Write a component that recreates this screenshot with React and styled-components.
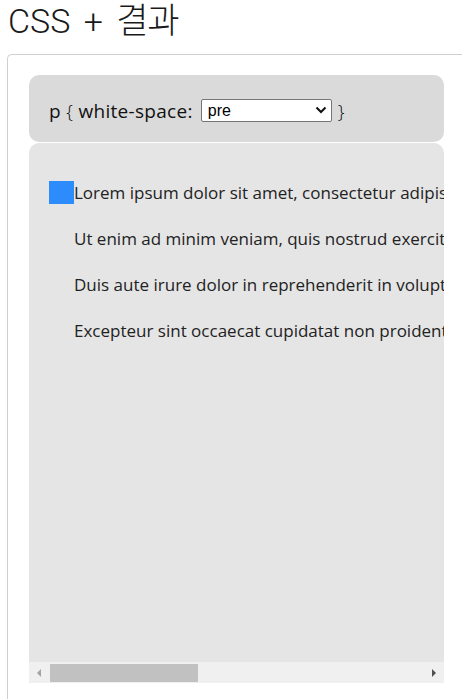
import React from 'react';
import styled, { createGlobalStyle } from 'styled-components';

const GlobalStyle = createGlobalStyle`
  html, body {
    margin: 0;
    padding: 0;
    background: #fff;
    overflow: hidden;
  }
  body {
    font-family: 'Open Sans', 'Noto Sans CJK KR', sans-serif;
    color: #222;
  }
`;

// Page shell
const Page = styled.div`
  padding-left: 7px;
  width: 520px;
`;

const Title = styled.h1`
  margin: 0;
  padding-left: 1px;
  height: 54px;
  line-height: 42px;
  font-family: Roboto, 'Noto Sans CJK KR', sans-serif;
  font-weight: 300;
  font-size: 34px;
  word-spacing: 5px;
  color: #1a1a1a;
`;

const Hangul = styled.span`
  font-family: 'Noto Sans CJK KR', sans-serif;
  font-weight: 300;
  font-size: 35px;
  line-height: 1;
  letter-spacing: -1px;
`;

const Frame = styled.div`
  border: 1px solid #cfcfcf;
  border-right: none;
  border-radius: 5px 0 0 0;
  padding: 20px 0 30px 21px;
`;

// CSS control bar
const ControlBar = styled.div`
  width: 415px;
  height: 67px;
  box-sizing: border-box;
  background: #dadada;
  border-radius: 10px;
  display: flex;
  align-items: center;
  padding: 4px 0 0 20px;
  font-size: 19px;
  letter-spacing: 0.3px;
  color: #111;
  white-space: pre;
`;

const Brace = styled.span`
  font-weight: 300;
`;

const SelectWrap = styled.span`
  position: relative;
  display: inline-flex;
  margin: 0 6px 0 8px;
`;

const Select = styled.select`
  appearance: none;
  width: 131px;
  height: 23px;
  box-sizing: border-box;
  border: 1px solid #767676;
  border-radius: 2px;
  background: #fff;
  padding: 0 0 0 6px;
  font-family: 'Liberation Sans', Arial, sans-serif;
  font-size: 16px;
  letter-spacing: 0;
  color: #000;
  outline: none;
`;

const Chevron = styled.svg`
  position: absolute;
  right: 5px;
  top: 7px;
  pointer-events: none;
`;

// Result panel
const Result = styled.div`
  margin-top: 1px;
  width: 415px;
  height: 540px;
  background: #e5e5e5;
  border-radius: 10px 10px 0 0;
  display: flex;
  flex-direction: column;
  overflow: hidden;
`;

const Viewport = styled.div`
  flex: 1;
  overflow: hidden;
  padding: 38px 0 0 20px;
`;

const Line = styled.p`
  margin: 0 0 23px;
  height: 23px;
  display: flex;
  align-items: center;
  padding-left: ${({ $marker }) => ($marker ? 0 : 25)}px;
  white-space: pre;
  font-size: 17px;
  color: #222;
`;

const Marker = styled.span`
  flex: none;
  width: 25px;
  height: 23px;
  background: #2d8cfc;
`;

const Scrollbar = styled.div`
  flex: none;
  height: 21px;
  background: #f0f0f0;
  display: flex;
  align-items: stretch;
`;

const ArrowButton = styled.div`
  width: 21px;
  display: flex;
  align-items: center;
  justify-content: center;
`;

const Track = styled.div`
  flex: 1;
  display: flex;
  padding: 2px 0 1px;
`;

const Thumb = styled.div`
  width: 148px;
  background: #c1c1c1;
`;

const lines = [
  'Lorem ipsum dolor sit amet, consectetur adipiscing elit, sed do eiusmod tempor incididunt ut labore et dolore magna aliqua.',
  'Ut enim ad minim veniam, quis nostrud exercitation ullamco laboris nisi ut aliquip ex ea commodo consequat.',
  'Duis aute irure dolor in reprehenderit in voluptate velit esse cillum dolore eu fugiat nulla pariatur.',
  'Excepteur sint occaecat cupidatat non proident, sunt in culpa qui officia deserunt mollit anim id est laborum.',
];

export default function App() {
  return (
    <>
      <GlobalStyle />
      <Page>
        <Title>
          CSS + <Hangul>결과</Hangul>
        </Title>
        <Frame>
          <ControlBar>
            p <Brace>{'{'}</Brace> white-space:
            <SelectWrap>
              <Select defaultValue="pre">
                <option value="normal">normal</option>
                <option value="nowrap">nowrap</option>
                <option value="pre">pre</option>
                <option value="pre-wrap">pre-wrap</option>
                <option value="pre-line">pre-line</option>
                <option value="break-spaces">break-spaces</option>
              </Select>
              <Chevron width="12" height="8" viewBox="0 0 12 8">
                <path d="M1.5 1.5 L6 6 L10.5 1.5" fill="none" stroke="#111" strokeWidth="2" />
              </Chevron>
            </SelectWrap>
            <Brace>{'}'}</Brace>
          </ControlBar>
          <Result>
            <Viewport>
              {lines.map((text, i) => (
                <Line key={i} $marker={i === 0}>
                  {i === 0 && <Marker />}
                  {text}
                </Line>
              ))}
            </Viewport>
            <Scrollbar>
              <ArrowButton>
                <svg width="5" height="8" viewBox="0 0 5 8">
                  <path d="M4 0 L0 4 L4 8 Z" fill="#a3a3a3" />
                </svg>
              </ArrowButton>
              <Track>
                <Thumb />
              </Track>
              <ArrowButton>
                <svg width="5" height="8" viewBox="0 0 5 8">
                  <path d="M1 0 L5 4 L1 8 Z" fill="#505050" />
                </svg>
              </ArrowButton>
            </Scrollbar>
          </Result>
        </Frame>
      </Page>
    </>
  );
}
